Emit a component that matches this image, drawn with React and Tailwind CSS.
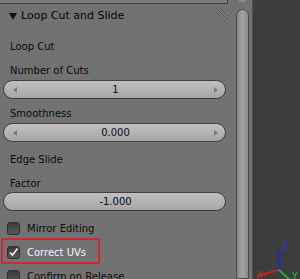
import React from "react";

const font = { fontFamily: '"DejaVu Sans", "Liberation Sans", sans-serif' };

function Label({ children, className = "" }) {
  return (
    <div className={"flex items-center pl-[10px] text-[10px] text-[#0c0c0c] " + className}>
      {children}
    </div>
  );
}

function NumField({ value, arrows = true }) {
  return (
    <div className="ml-[3px] w-[223px] h-[19px] rounded-full border border-[#3e3e3e] bg-gradient-to-b from-[#c0c0c0] to-[#a6a6a6] flex items-center justify-between pl-[9px] pr-[7px] text-[10px] text-[#0c0c0c]">
      <span className={arrows ? "w-0 h-0 border-y-[3px] border-y-transparent border-r-[4px] border-r-[#7a7a7a]" : "w-[4px]"} />
      <span>{value}</span>
      <span className={arrows ? "w-0 h-0 border-y-[3px] border-y-transparent border-l-[4px] border-l-[#7a7a7a]" : "w-[4px]"} />
    </div>
  );
}

function Check({ label, checked }) {
  return (
    <div className="flex items-center gap-[7px] pl-[7px] text-[10px] text-[#0c0c0c]">
      <span className="w-[13px] h-[13px] rounded-[3px] border border-[#2e2e2e] bg-gradient-to-b from-[#3a3a3a] to-[#585858] flex items-center justify-center">
        {checked && (
          <svg width="11" height="11" viewBox="0 0 11 11">
            <path d="M2 5.5 L4.5 8 L9.5 1.5" fill="none" stroke="#f0f0f0" strokeWidth="1.6" />
          </svg>
        )}
      </span>
      <span className={checked ? "text-[#f4f4f4]" : ""}>{label}</span>
    </div>
  );
}

export default function App() {
  return (
    <div className="w-[300px] h-[279px] overflow-hidden flex bg-[#3d3d3d]" style={font}>
      {/* properties panel */}
      <div className="w-[253px] h-full flex bg-[#727272] border-r border-[#4e4e4e] overflow-hidden">
        <div className="w-[233px] shrink-0">
          <div className="w-[228px] h-[4px] bg-[#797979] border-b border-r border-[#3c3c3c]" />

          <div className="h-[24px] flex items-center justify-between pl-[9px] pr-[4px]">
            <div className="flex items-center gap-[4px] text-[11px] text-[#050505]">
              <span className="w-0 h-0 border-x-[4px] border-x-transparent border-t-[7px] border-t-[#111]" />
              <span>Loop Cut and Slide</span>
            </div>
            <svg width="18" height="18" viewBox="0 0 18 18">
              <path d="M1 1 L17 17 M5 1 L17 13 M9 1 L17 9" stroke="#5a5a5a" strokeWidth="1" />
              <path d="M2 1 L17 16 M6 1 L17 12 M10 1 L17 8" stroke="#8c8c8c" strokeWidth="0.6" />
            </svg>
          </div>

          <Label className="h-[20px] mt-[8px]">Loop Cut</Label>
          <Label className="h-[19px] mt-[5px]">Number of Cuts</Label>
          <NumField value="1" />
          <Label className="h-[19px] mt-[5px]">Smoothness</Label>
          <NumField value="0.000" />
          <Label className="h-[19px] mt-[8px]">Edge Slide</Label>
          <Label className="h-[18px] mt-[5px]">Factor</Label>
          <NumField value="-1.000" arrows={false} />

          <div className="h-[18px] mt-[8px] flex items-center">
            <Check label="Mirror Editing" />
          </div>
          <div className="relative h-[18px] mt-[6px] flex items-center">
            <Check label="Correct UVs" checked />
            <div className="absolute left-[1px] top-[-5px] w-[99px] h-[26px] border-[2.5px] border-[#d8262c]" />
          </div>
          <div className="h-[18px] mt-[6px] flex items-center">
            <Check label="Confirm on Release" />
          </div>
        </div>

        {/* scrollbar */}
        <div className="w-[20px] flex flex-col items-start">
          <div className="ml-[6px] w-[6px] h-[2px] bg-[#8a8a8a]" />
          <div className="ml-[3px] mt-[7px] w-[13px] flex-1 rounded-t-full border border-[#4a4a4a] bg-gradient-to-r from-[#878787] via-[#a2a2a2] to-[#8a8a8a]" />
        </div>
      </div>

      {/* 3D viewport */}
      <div className="flex-1 relative">
        <svg className="absolute left-0 top-0" width="47" height="279" viewBox="0 0 47 279">
          <line x1="26" y1="270" x2="26" y2="249" stroke="#1b2fc6" strokeWidth="2" />
          <text x="29" y="249" fontSize="9" fill="#2a3ad8" fontFamily="DejaVu Sans">Z</text>
          <line x1="26" y1="270" x2="4" y2="276" stroke="#c42222" strokeWidth="2.2" />
          <text x="4" y="278" fontSize="8" fill="#d02828" fontFamily="DejaVu Sans">X</text>
          <line x1="26" y1="270" x2="37" y2="280" stroke="#22b022" strokeWidth="2" />
          <text x="39" y="279" fontSize="9" fill="#2ec02e" fontFamily="DejaVu Sans">Y</text>
        </svg>
      </div>
    </div>
  );
}
